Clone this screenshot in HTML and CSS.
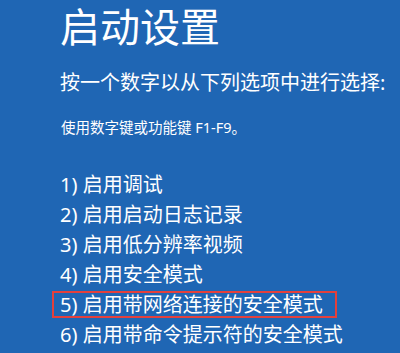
FILE: index.html
```html
<!DOCTYPE html>
<html lang="zh-CN">
<head>
<meta charset="utf-8">
<title>启动设置</title>
<link rel="stylesheet" href="styles.css">
</head>
<body>
<main class="screen">
  <h1 class="title">启动设置</h1>
  <p class="prompt">按一个数字以从下列选项中进行选择:</p>
  <p class="hint">使用数字键或功能键 F1-F9。</p>
  <ol class="options">
    <li class="option">1) 启用调试</li>
    <li class="option">2) 启用启动日志记录</li>
    <li class="option">3) 启用低分辨率视频</li>
    <li class="option">4) 启用安全模式</li>
    <li class="option option-marked">5) 启用带网络连接的安全模式</li>
    <li class="option">6) 启用带命令提示符的安全模式</li>
  </ol>
</main>
</body>
</html>
```

FILE: styles.css
```css
html, body {
  margin: 0;
  padding: 0;
  background: #1f66b4;
}

.screen {
  width: 400px;
  height: 353px;
  overflow: hidden;
  box-sizing: border-box;
  padding: 7px 0 0 60px;
  color: #ffffff;
  font-family: "Noto Sans", "Noto Sans CJK SC", sans-serif;
}

.title {
  margin: 0;
  font-size: 40px;
  line-height: 40px;
  font-weight: 400;
}

.prompt {
  margin: 26px 0 0 0;
  font-size: 20px;
  line-height: 20px;
}

.hint {
  margin: 27px 0 0 1px;
  font-size: 14.5px;
  line-height: 15px;
}

.options {
  list-style: none;
  margin: 40px 0 0 0;
  padding: 0;
  display: flex;
  flex-direction: column;
  gap: 10px;
}

.option {
  font-size: 20px;
  line-height: 20px;
  height: 20px;
  white-space: nowrap;
}

.option-marked {
  position: relative;
}

.option-marked::after {
  content: "";
  position: absolute;
  left: -8px;
  top: -4px;
  width: 285px;
  height: 27px;
  border: 2px solid #e4403c;
  box-sizing: border-box;
}
```
